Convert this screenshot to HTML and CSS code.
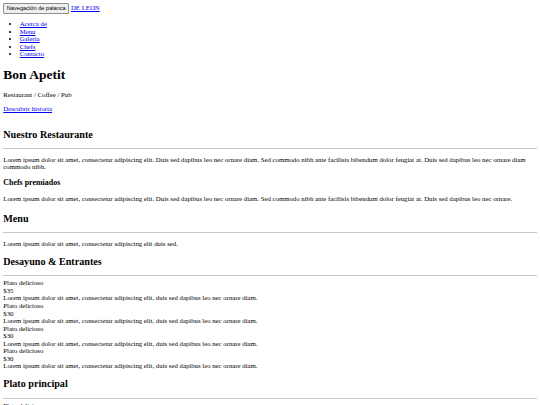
FILE: index.html
```html
<!DOCTYPE html>
<html lang="es">
<head>
    <meta charset="UTF-8">
    <meta name="viewport" content="width=device-width, initial-scale=1.0">
    <title>Bon Apetit - De Leon</title>
    <link rel="stylesheet" href="styles.css">
</head>
<body>
    <nav class="navbar">
        <button class="navbar-toggle">Navegación de palanca</button> <a href="#" class="brand">DE LEON</a>
        <ul class="nav-links">
            <li><a href="#about">Acerca de</a></li>
            <li><a href="#menu">Menu</a></li>
            <li><a href="#gallery">Galeria</a></li>
            <li><a href="#chefs">Chefs</a></li>
            <li><a href="#contact">Contacto</a></li>
        </ul>
    </nav>

    <header class="intro">
        <h1>Bon Apetit</h1>
        <p>Restaurant / Coffee / Pub</p>
        <p><a href="#about">Descubrir historia</a></p>
    </header>

    <section id="about" class="section">
        <h2>Nuestro Restaurante</h2>
        <hr>
        <p>Lorem ipsum dolor sit amet, consectetur adipiscing elit. Duis sed dapibus leo nec ornare diam. Sed commodo nibh ante facilisis bibendum dolor feugiat at. Duis sed dapibus leo nec ornare diam commodo nibh.</p>
        <h3>Chefs premiados</h3>
        <p>Lorem ipsum dolor sit amet, consectetur adipiscing elit. Duis sed dapibus leo nec ornare diam. Sed commodo nibh ante facilisis bibendum dolor feugiat at. Duis sed dapibus leo nec ornare.</p>
    </section>

    <section id="menu" class="section menu">
        <h2>Menu</h2>
        <hr>
        <p>Lorem ipsum dolor sit amet, consectetur adipiscing elit duis sed.</p>

        <h2>Desayuno &amp; Entrantes</h2>
        <hr>
        <div class="menu-item">
            <div class="menu-item-name">Plato delicioso</div>
            <div class="menu-item-price">$35</div>
            <div class="menu-item-description">Lorem ipsum dolor sit amet, consectetur adipiscing elit, duis sed dapibus leo nec ornare diam.</div>
        </div>
        <div class="menu-item">
            <div class="menu-item-name">Plato delicioso</div>
            <div class="menu-item-price">$30</div>
            <div class="menu-item-description">Lorem ipsum dolor sit amet, consectetur adipiscing elit, duis sed dapibus leo nec ornare diam.</div>
        </div>
        <div class="menu-item">
            <div class="menu-item-name">Plato delicioso</div>
            <div class="menu-item-price">$30</div>
            <div class="menu-item-description">Lorem ipsum dolor sit amet, consectetur adipiscing elit, duis sed dapibus leo nec ornare diam.</div>
        </div>
        <div class="menu-item">
            <div class="menu-item-name">Plato delicioso</div>
            <div class="menu-item-price">$30</div>
            <div class="menu-item-description">Lorem ipsum dolor sit amet, consectetur adipiscing elit, duis sed dapibus leo nec ornare diam.</div>
        </div>

        <h2>Plato principal</h2>
        <hr>
        <div class="menu-item">
            <div class="menu-item-name">Plato delicioso</div>
            <div class="menu-item-price">$45</div>
            <div class="menu-item-description">Lorem ipsum dolor sit amet, consectetur adipiscing elit, duis sed dapibus leo nec ornare diam.</div>
        </div>
    </section>
</body>
</html>
```

FILE: styles.css
```css
body {
    margin: 3.3px;
    font-family: "Liberation Serif", "Times New Roman", serif;
    font-size: 6.77px;
    line-height: 7.55px;
    color: #000;
}
a {
    color: #0000ee;
}
.navbar-toggle {
    font-family: "Liberation Sans", Arial, sans-serif;
    font-size: 5.65px;
    line-height: 6.3px;
    padding: 1px 2.5px;
    border: 1px solid #8f8f8f;
    border-radius: 1px;
    background-color: #efefef;
    color: #000;
}
.nav-links {
    margin: 6.6px 0;
    padding-left: 16.4px;
}
h1 {
    font-size: 13.5px;
    line-height: 15.1px;
    margin: 8.8px 0;
}
h2 {
    font-size: 10.15px;
    line-height: 11.3px;
    margin: 8.2px 0;
}
h3 {
    font-size: 7.95px;
    line-height: 8.8px;
    margin: 7.7px 0;
}
p {
    margin: 6.6px 0;
}
hr {
    margin: 3.3px 0;
    border: none;
    border-top: 1px solid #c8c8c8;
    height: 0;
}
.intro {
    margin-bottom: 16.4px;
}
.menu {
    margin-top: 10.2px;
}
```
